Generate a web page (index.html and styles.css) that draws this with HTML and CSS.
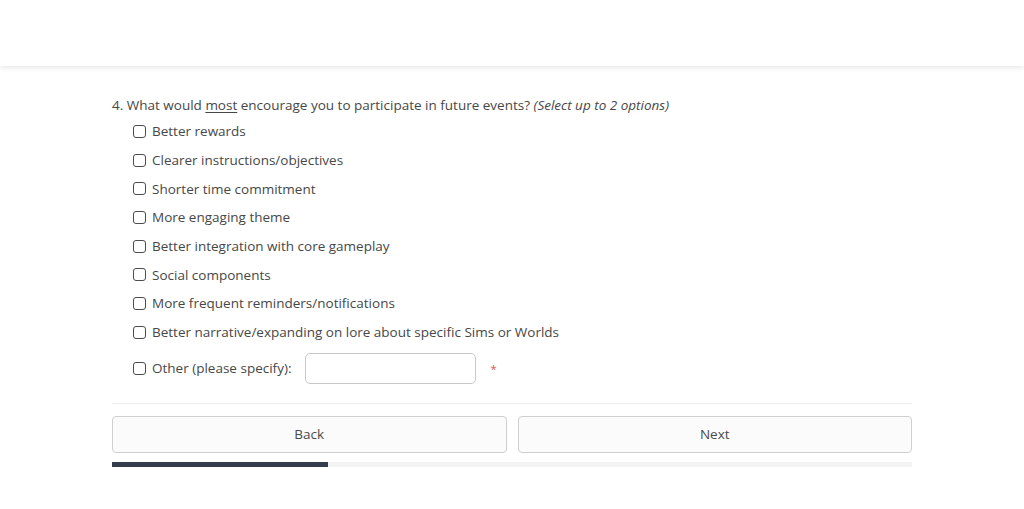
FILE: index.html
```html
<!DOCTYPE html>
<html lang="en">
<head>
    <meta charset="UTF-8">
    <meta name="viewport" content="width=device-width, initial-scale=1.0">
    <title>Survey</title>
    <link rel="stylesheet" href="styles.css">
</head>
<body>
    <header class="topbar"></header>

    <main class="survey">
        <form class="question">
            <p class="question-title">4. What would <u>most</u> encourage you to participate in future events? <em>(Select up to 2 options)</em></p>

            <ul class="options">
                <li><label><span class="box"></span>Better rewards</label></li>
                <li><label><span class="box"></span>Clearer instructions/objectives</label></li>
                <li><label><span class="box"></span>Shorter time commitment</label></li>
                <li><label><span class="box"></span>More engaging theme</label></li>
                <li><label><span class="box"></span>Better integration with core gameplay</label></li>
                <li><label><span class="box"></span>Social components</label></li>
                <li><label><span class="box"></span>More frequent reminders/notifications</label></li>
                <li><label><span class="box"></span>Better narrative/expanding on lore about specific Sims or Worlds</label></li>
                <li class="other">
                    <label><span class="box"></span>Other (please specify):</label>
                    <input type="text" class="other-input">
                    <span class="required">*</span>
                </li>
            </ul>
        </form>

        <div class="nav">
            <button type="button" class="btn">Back</button>
            <button type="button" class="btn">Next</button>
        </div>

        <div class="progress"><div class="progress-fill" style="width: 27%"></div></div>
    </main>
</body>
</html>
```

FILE: styles.css
```css
* { margin: 0; padding: 0; box-sizing: border-box; }

body {
    font-family: "Open Sans", "Liberation Sans", sans-serif;
    font-size: 13.5px;
    color: #474747;
    background: #fff;
}

.topbar {
    height: 66px;
    background: #fff;
    box-shadow: 0 1px 6px rgba(0,0,0,0.12);
}

.survey {
    width: 800px;
    margin: 0 auto;
    padding-top: 30px;
}

.question-title {
    line-height: 18px;
}

.question-title u {
    text-underline-offset: 2px;
}

.options {
    list-style: none;
    padding-left: 21px;
    margin-top: 3px;
}

.options li {
    height: 28.7px;
    display: flex;
    align-items: center;
}

.options label {
    display: flex;
    align-items: center;
}

.box {
    width: 13px;
    height: 13px;
    border: 1.5px solid #4d4d4d;
    border-radius: 3px;
    margin-right: 6px;
}

.options li.other {
    height: 43px;
}

.other-input {
    width: 171px;
    height: 31px;
    margin-left: 14px;
    border: 1px solid #c8c8c8;
    border-radius: 5px;
    background: #fff;
}

.required {
    color: #d9534f;
    margin-left: 14px;
    font-size: 11px;
}

.nav {
    display: grid;
    grid-template-columns: 1fr 1fr;
    gap: 11px;
    margin-top: 13px;
    padding-top: 12px;
    border-top: 1px solid #ececec;
}

.btn {
    height: 37px;
    background: #fbfbfb;
    border: 1px solid #cfcfcf;
    border-radius: 4px;
    font-family: inherit;
    font-size: 13.5px;
    color: #4a4a4a;
}

.progress {
    height: 5px;
    margin-top: 9px;
    background: #f3f3f3;
}

.progress-fill {
    height: 100%;
    background: #353d4a;
}
```
